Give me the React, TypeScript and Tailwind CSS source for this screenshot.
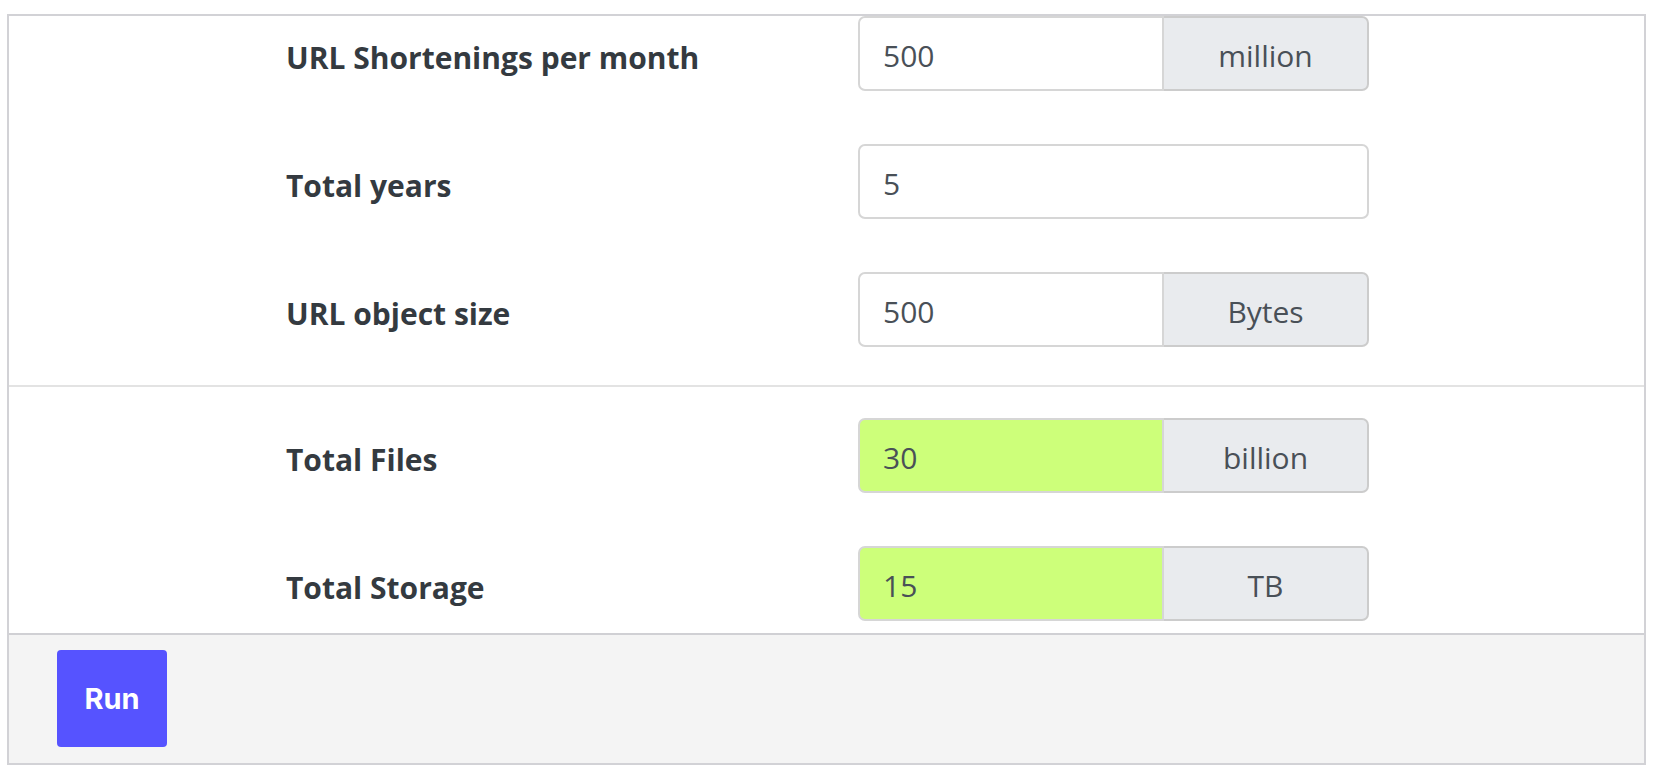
import React from 'react';

type Row = { label: string; value: string; unit?: string; result?: boolean };

const inputRows: Row[] = [
  { label: 'URL Shortenings per month', value: '500', unit: 'million' },
  { label: 'Total years', value: '5' },
  { label: 'URL object size', value: '500', unit: 'Bytes' },
];

const resultRows: Row[] = [
  { label: 'Total Files', value: '30', unit: 'billion', result: true },
  { label: 'Total Storage', value: '15', unit: 'TB', result: true },
];

function FieldRow({ row }: { row: Row }) {
  return (
    <div className="flex items-center h-[75px]">
      <div className="w-[572px] pt-[8px] text-[30px] font-bold text-[#343a40] leading-none">{row.label}</div>
      <div className="flex w-[511px] h-[75px] text-[30px] text-[#495057]">
        <input
          readOnly
          defaultValue={row.value}
          className={`h-full pl-[23px] pt-[3px] border-2 border-[#d6d6d6] outline-none ${
            row.unit ? 'w-[306px] rounded-l-[7px]' : 'w-full rounded-[7px]'
          } ${row.result ? 'bg-[#cdff7a]' : 'bg-white'}`}
        />
        {row.unit && (
          <div className="flex-1 flex items-center justify-center pt-[3px] bg-[#e9ebee] border-2 border-l-0 border-[#cccccc] rounded-r-[7px]">
            {row.unit}
          </div>
        )}
      </div>
    </div>
  );
}

export default function App() {
  return (
    <div className="w-full h-[767px] bg-white pt-[14px] px-[7px]" style={{ fontFamily: '"Open Sans", "Noto Sans", sans-serif' }}>
      <div className="h-[751px] border-2 border-[#d2d2d6] flex flex-col">
        {/* Inputs */}
        <div className="flex flex-col gap-[53px] pl-[277px]">
          {inputRows.map(r => (
            <FieldRow key={r.label} row={r} />
          ))}
        </div>

        <div className="mt-[38px] h-[2px] bg-[#e3e3e3]" />

        {/* Results */}
        <div className="flex flex-col gap-[53px] pl-[277px] pt-[31px] pb-[12px]">
          {resultRows.map(r => (
            <FieldRow key={r.label} row={r} />
          ))}
        </div>

        <div className="flex-1 border-t-2 border-[#d0d0d4] bg-[#f4f4f4] pl-[48px] pt-[15px]">
          <button
            className="w-[110px] h-[97px] rounded-[4px] bg-[#5653ff] text-white text-[29px] font-bold"
            style={{ fontFamily: 'Inter, "Liberation Sans", sans-serif' }}
          >
            Run
          </button>
        </div>
      </div>
    </div>
  );
}
